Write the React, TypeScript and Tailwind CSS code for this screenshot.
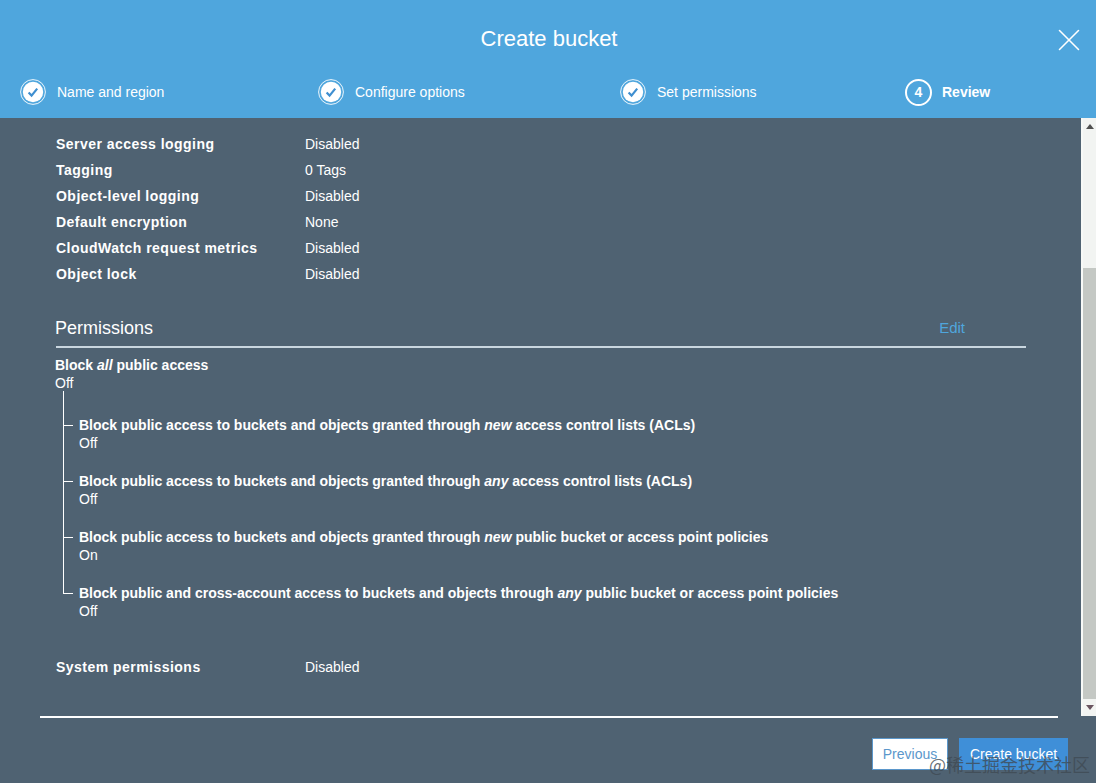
import { X } from "lucide-react";
import type { ReactNode } from "react";

const summary = [
  ["Server access logging", "Disabled"],
  ["Tagging", "0 Tags"],
  ["Object-level logging", "Disabled"],
  ["Default encryption", "None"],
  ["CloudWatch request metrics", "Disabled"],
  ["Object lock", "Disabled"],
];

const blocks: { before: string; em: string; after: string; value: string }[] = [
  { before: "Block public access to buckets and objects granted through ", em: "new", after: " access control lists (ACLs)", value: "Off" },
  { before: "Block public access to buckets and objects granted through ", em: "any", after: " access control lists (ACLs)", value: "Off" },
  { before: "Block public access to buckets and objects granted through ", em: "new", after: " public bucket or access point policies", value: "On" },
  { before: "Block public and cross-account access to buckets and objects through ", em: "any", after: " public bucket or access point policies", value: "Off" },
];

function DoneStep({ label, className }: { label: string; className: string }) {
  return (
    <div className={`flex items-center ${className}`}>
      <svg width="26" height="26" viewBox="0 0 26 26" className="shrink-0">
        <circle cx="13" cy="13" r="12.4" fill="none" stroke="#fff" strokeWidth="0.9" />
        <circle cx="13" cy="13" r="10.2" fill="#fff" />
        <path d="M8.6 13.4l3 3.2 5.6-7" fill="none" stroke="#3f8fd0" strokeWidth="2.2" />
      </svg>
      <span className="ml-[11px] text-[14px] text-white">{label}</span>
    </div>
  );
}

function Row({ label, children }: { label: string; children: ReactNode }) {
  return (
    <div className="flex h-[26px] items-center">
      <div className="w-[249px] font-bold tracking-[0.47px]">{label}</div>
      <div>{children}</div>
    </div>
  );
}

export default function App() {
  return (
    <div className="relative flex h-[783px] w-[1096px] flex-col overflow-hidden bg-[#4f6272] font-['Liberation_Sans',Arial,sans-serif] text-[14px] text-white">
      <header className="h-[118px] shrink-0 bg-[#4fa6dd]">
        <div className="relative flex h-[76px] items-center justify-center pl-[2px] pt-[1px] text-[22px]">
          Create bucket
          <button className="absolute right-[8px] top-[21px] text-white">
            <X className="h-[38px] w-[38px]" strokeWidth={1} />
          </button>
        </div>
        <div className="flex h-[32px] items-center pl-[20px]">
          <DoneStep label="Name and region" className="w-[298px]" />
          <DoneStep label="Configure options" className="w-[302px]" />
          <DoneStep label="Set permissions" className="w-[285px]" />
          <div className="flex items-center">
            <div className="flex h-[27px] w-[27px] items-center justify-center rounded-full border-2 border-white text-[14px] font-bold">
              4
            </div>
            <span className="ml-[10px] font-bold">Review</span>
          </div>
        </div>
      </header>

      <div className="flex h-[598px] shrink-0">
        <main className="w-[1081px] pl-[56px] pr-[55px] pt-[13px]">
          {summary.map(([label, value]) => (
            <Row key={label} label={label}>
              {value}
            </Row>
          ))}

          <div className="mt-[30px] flex h-[31px] items-center justify-between border-b-2 border-[#c9d6df] pb-[6px]">
            <h2 className="-ml-[1px] text-[18px]">Permissions</h2>
            <a className="mr-[61px] text-[15px] text-[#4fa6dd]">Edit</a>
          </div>

          <div className="-ml-[1px] mt-[8px] font-bold leading-[18px]">
            Block <em>all</em> public access
          </div>
          <div className="-ml-[1px] leading-[18px]">Off</div>

          <div className="relative ml-[7px] pt-[24px]">
            <div className="absolute bottom-[27px] left-0 top-[-1px] w-px bg-white" />
            {blocks.map((block, index) => (
              <div key={index} className="relative mb-[20px] pl-[16px]">
                <div className="absolute left-0 top-[9px] h-px w-[10px] bg-white" />
                <div className="font-bold leading-[18px]">
                  {block.before}
                  <em>{block.em}</em>
                  {block.after}
                </div>
                <div className="leading-[18px]">{block.value}</div>
              </div>
            ))}
          </div>

          <div className="mt-[34px]">
            <Row label="System permissions">Disabled</Row>
          </div>
        </main>

        <aside className="flex w-[15px] flex-col border-l-2 border-[#f7f9f7] bg-[#f2f4f2]">
          <div className="flex h-[17px] items-center justify-center text-[#505050]">
            <svg width="8" height="5" viewBox="0 0 8 5">
              <path d="M0 5l4-5 4 5z" fill="currentColor" />
            </svg>
          </div>
          <div className="mt-[133px] flex-1 bg-[#c4c8c4]" />
          <div className="flex h-[17px] items-center justify-center text-[#6a5560]">
            <svg width="8" height="5" viewBox="0 0 8 5">
              <path d="M0 0l4 5 4-5z" fill="currentColor" />
            </svg>
          </div>
        </aside>
      </div>

      <footer className="flex-1">
        <div className="ml-[40px] h-[2px] w-[1018px] bg-white" />
        <div className="mr-[28px] mt-[20px] flex justify-end gap-[11px]">
          <button className="h-[32px] w-[76px] border border-[#5b97cb] bg-white text-[#5b97cb]">Previous</button>
          <button className="h-[32px] w-[109px] border border-[#3f8fd8] bg-[#3f8fd8] text-white">Create bucket</button>
        </div>
      </footer>

      <div className="absolute left-[929px] top-[753px] font-['Noto_Sans_CJK_SC',sans-serif] text-[18px] leading-[22px] text-[#3f4a54]/80">
        @稀土掘金技术社区
      </div>
    </div>
  );
}
